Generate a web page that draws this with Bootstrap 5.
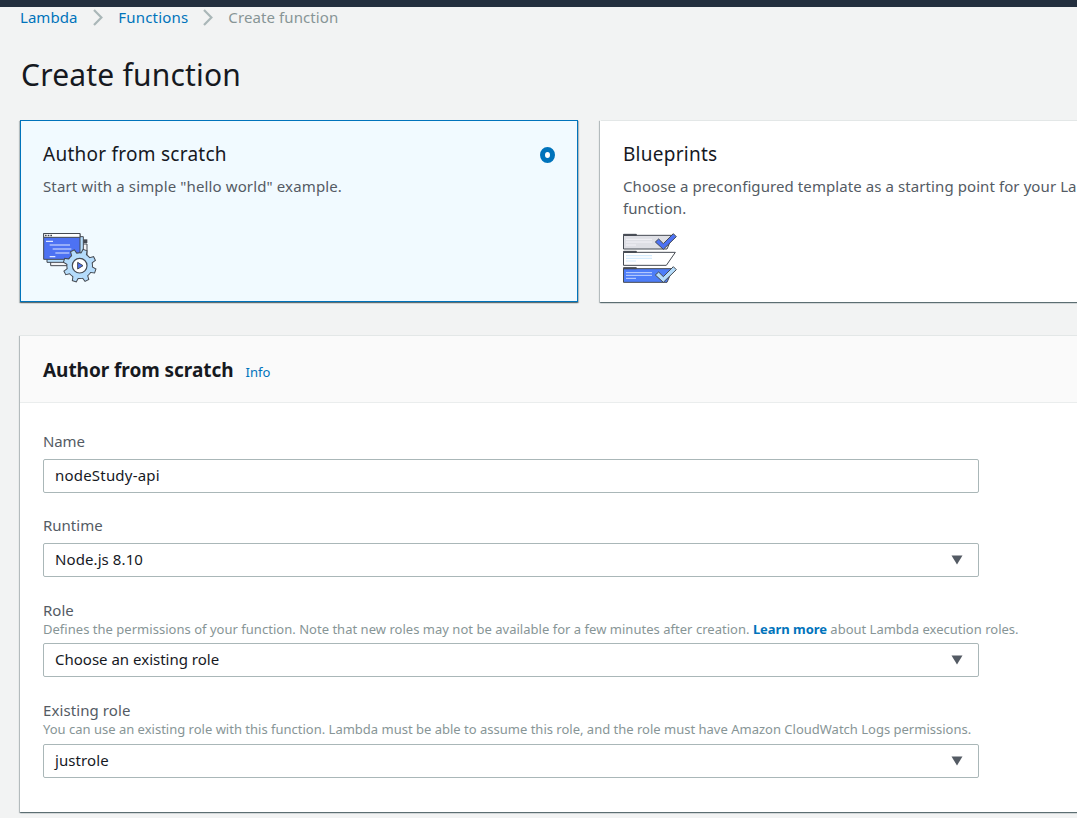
<!DOCTYPE html>
<html lang="en">
<head>
<meta charset="utf-8">
<meta name="viewport" content="width=device-width, initial-scale=1">
<title>Create function</title>
<link rel="stylesheet" href="https://cdn.jsdelivr.net/npm/bootstrap@5.3.0/dist/css/bootstrap.min.css">
<style>
html{overflow:hidden}
body{font-family:"Noto Sans",sans-serif;font-size:15px;line-height:20px;color:#16191f;background:#f2f3f3;overflow:hidden;min-height:100vh}
.topbar{height:7px;background:#232f3e}
.page{width:1178px;padding:0 20px}
a{color:#0073bb;text-decoration:none}
.crumbs{height:20px;color:#879596}
.crumbs a{letter-spacing:.03px}
.crumbs a.fn{letter-spacing:.18px}
.crumbs span{letter-spacing:.1px}
.chev{width:10px;height:17px;fill:none;stroke:#aab7b8;stroke-width:2.2}
.title{font-size:30px;line-height:40px;font-weight:400;letter-spacing:.2px;margin:28px 0 25px 1px}
.tiles{gap:22px}
.tile{width:558px;height:182px;flex:none;padding:22px 22px 0;border:1px solid #fff;border-top-color:#e3e7e7;background:#fff;box-shadow:0 1px 1px 0 rgba(0,28,36,.4),1px 1px 1px 0 rgba(0,28,36,.2),-1px 1px 1px 0 rgba(0,28,36,.2)}
.tile.sel{background:#f1faff;border-color:#0073bb}
.tile h2{font-size:19px;line-height:24px;font-weight:400;letter-spacing:.25px;margin:-1px 0 9px}
.tile p{line-height:22px;color:#545b64;margin:0;height:58px;letter-spacing:.13px}
.tile p.wide{letter-spacing:.085px}
.art{width:54px;height:50px;display:block}
.dot{width:15px;height:16px;border:5px solid #0073bb;border-radius:50%;background:#fff;margin:4px 0 0}
.panel{margin-top:33px;height:477px;background:#fff;border-top:1px solid #e3e7e7;box-shadow:0 1px 1px 0 rgba(0,28,36,.4),1px 1px 1px 0 rgba(0,28,36,.2),-1px 1px 1px 0 rgba(0,28,36,.2)}
.panel-top{height:67px;background:#fafafa;border-bottom:1px solid #eaeded;padding:22px 23px 0;gap:12px}
.panel h2{font-size:19px;line-height:24px;font-weight:700;letter-spacing:-.05px;margin:0}
.info{font-size:13px}
.panel-body{padding:28px 23px 0}
.fields{width:936px}
.name-label{color:#545b64;height:20px;white-space:nowrap}
.hint{font-size:13px;line-height:18px;color:#879596;white-space:nowrap}
.hint a{letter-spacing:-.05px}
.ls-1{letter-spacing:.023px}
.ls-2{letter-spacing:.09px}
.box{height:34px;border:1px solid #aab7b8;border-radius:2px;padding:0 15px 3px 11px;background:#fff}
.box svg{width:12px;height:10px;margin-top:2px;fill:#545b64}
</style>
</head>
<body>
<div class="topbar"></div>
<div class="page">
  <nav class="crumbs d-flex align-items-center">
    <a href="#">Lambda</a>
    <svg class="chev" style="margin:1px 15px 0 16px" viewBox="0 0 10 17"><path d="M1 1 8.4 8.5 1 16"/></svg>
    <a class="fn" href="#">Functions</a>
    <svg class="chev" style="margin:1px 15px 0 15px" viewBox="0 0 10 17"><path d="M1 1 8.4 8.5 1 16"/></svg>
    <span>Create function</span>
  </nav>
  <h1 class="title">Create function</h1>

  <div class="tiles d-flex">
    <div class="tile sel">
      <div class="d-flex justify-content-between align-items-start"><h2>Author from scratch</h2><i class="dot"></i></div>
      <p>Start with a simple "hello world" example.</p>
      <svg class="art" viewBox="27 24 162 150">
        <g stroke="#454a52" stroke-width="3">
          <path fill="#f4f4f6" d="M50 57h109v65H50z"/>
          <path fill="#b5dcfb" d="M39 35h109v77H39z"/>
          <path fill="#4d72f3" d="M29 25.500h109V103H29z"/>
          <path fill="#fff" d="M29 25.500h109V37H29z"/>
        </g>
        <path d="M148 43h12v11h-12z" fill="#454a52"/>
        <path d="M33 31.500h5m3 0h5m3 0h5" stroke="#454a52" stroke-width="4"/>
        <path d="M36 49h21M47 60h61M56 72h56M64 84h42M47 95h17" stroke="#dfe8ff" stroke-width="3.500"/>
        <defs>
          <g id="gear">
            <circle cx="137" cy="122" r="37"/>
            <path id="tooth" d="M129 90 132 74h10l3 16zM129 154l3 16h10l3-16z" transform="rotate(19 137 122)"/>
            <use href="#tooth" transform="rotate(45 137 122)"/>
            <use href="#tooth" transform="rotate(90 137 122)"/>
            <use href="#tooth" transform="rotate(135 137 122)"/>
          </g>
        </defs>
        <use href="#gear" fill="#454a52" stroke="#454a52" stroke-width="6"/>
        <use href="#gear" fill="#b5dcfb"/>
        <circle cx="137" cy="122" r="22" fill="#fff" stroke="#454a52" stroke-width="3.500"/>
        <path d="m131 112 16 10-16 10z" fill="#4d72f3" stroke="#454a52" stroke-width="3"/>
      </svg>
    </div>
    <div class="tile">
      <h2>Blueprints</h2>
      <p class="wide">Choose a preconfigured template as a starting point for your Lambda function.</p>
      <svg class="art" viewBox="24 24 162 150">
        <g stroke="#454a52" stroke-width="3">
          <path fill="#dedfe5" d="M25.500 31H174l-18 41H25.500z"/>
          <path fill="#fff" d="M25.500 82H181l-27 39H25.500z"/>
          <path fill="#4d7df8" d="M25.500 131H174l-18 41H25.500z"/>
          <path fill="#454a52" d="M25.500 28H64v3H25.500zM25.500 79H64v3H25.500zM25.500 128H64v3H25.500z"/>
          <path fill="#4d72f3" d="m121 51 10-9 14 14 30-30 9 9-39 38z"/>
          <path fill="#b5dcfb" d="m121 150 10-9 14 14 30-30 9 9-39 38z"/>
        </g>
        <path d="M33 43h78M33 51h78M33 60h30" stroke="#f7f7fb" stroke-width="2.500"/>
        <path d="M33 92h78M33 100h78M33 108h30" stroke="#d5ecfd" stroke-width="3.500"/>
        <path d="M33 143h78M33 151h78M33 160h30" stroke="#dfe8ff" stroke-width="2.500"/>
      </svg>
    </div>
  </div>

  <section class="panel">
    <div class="panel-top d-flex align-items-baseline"><h2>Author from scratch</h2><a class="info" href="#">Info</a></div>
    <div class="panel-body">
      <div class="fields">
        <div class="name-label" style="letter-spacing:-.1px">Name</div>
        <div class="box d-flex align-items-center mt-2" style="letter-spacing:.2px">nodeStudy-api</div>

        <div class="name-label" style="margin-top:22px">Runtime</div>
        <div class="box d-flex align-items-center justify-content-between mt-2"><span class="ls-2">Node.js 8.10</span><svg viewBox="0 0 12 10"><path d="M.5.500h11L6 9.500z"/></svg></div>

        <div class="name-label" style="margin-top:23px">Role</div>
        <div class="hint"><span class="ls-1">Defines the permissions of your function. Note that new roles may not be available for a few minutes after creation.</span> <a class="fw-bold" href="#">Learn more</a> about Lambda execution roles.</div>
        <div class="box d-flex align-items-center justify-content-between" style="margin-top:5px"><span>Choose an existing role</span><svg viewBox="0 0 12 10"><path d="M.5.500h11L6 9.500z"/></svg></div>

        <div class="name-label ls-2" style="margin-top:23px">Existing role</div>
        <div class="hint">You can use an existing role with this function. Lambda must be able to assume this role, and the role must have Amazon CloudWatch Logs permissions.</div>
        <div class="box d-flex align-items-center justify-content-between" style="margin-top:6px"><span class="ls-2">justrole</span><svg viewBox="0 0 12 10"><path d="M.5.500h11L6 9.500z"/></svg></div>
      </div>
    </div>
  </section>
</div>
<script src="https://cdn.jsdelivr.net/npm/bootstrap@5.3.0/dist/js/bootstrap.bundle.min.js"></script>
</body>
</html>
